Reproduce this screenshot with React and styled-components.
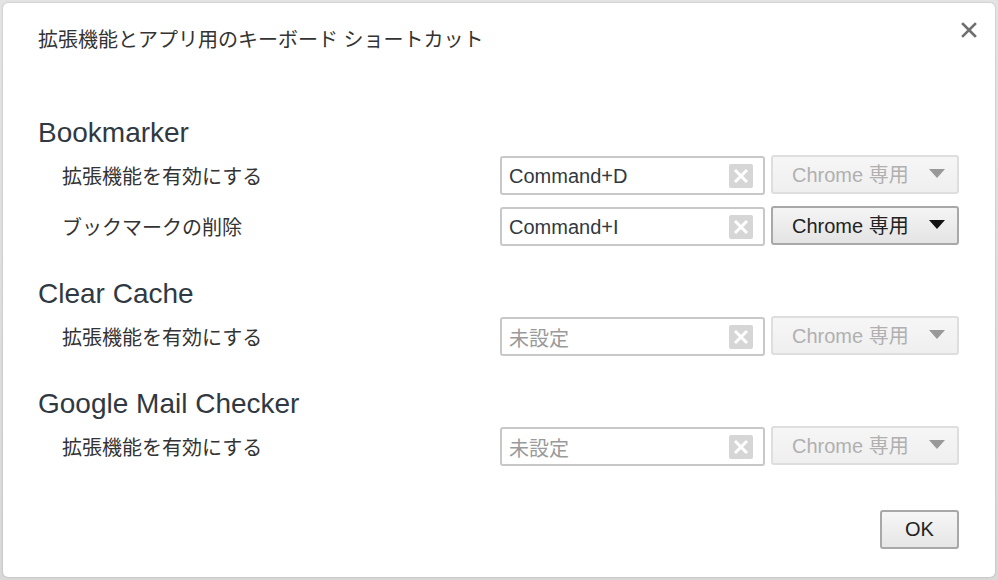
import React from "react";
import styled, { createGlobalStyle } from "styled-components";

const Global = createGlobalStyle`
  html, body { margin: 0; padding: 0; }
  body {
    background: #d6d6d6;
    font-family: "Liberation Sans", "Noto Sans CJK JP", sans-serif;
    width: 998px;
    height: 580px;
    overflow: hidden;
  }
`;

const Backdrop = styled.div`
  width: 998px;
  height: 580px;
  padding: 3px;
  box-sizing: border-box;
  background: linear-gradient(#e4e4e4, #d9d9d9);
`;

const Dialog = styled.div`
  width: 992px;
  height: 574px;
  box-sizing: border-box;
  background: #fff;
  border-radius: 5px;
  box-shadow: 0 0 2px rgba(0, 0, 0, 0.25);
  padding: 25px 36px 28px 35px;
  display: flex;
  flex-direction: column;
`;

const Header = styled.div`
  display: flex;
  justify-content: space-between;
  align-items: flex-start;
`;

const Title = styled.h1`
  margin: 0;
  font-size: 20px;
  line-height: 24px;
  font-weight: normal;
  color: #333;
`;

const Close = styled.button`
  margin: -10px -22px 0 0;
  width: 24px;
  height: 24px;
  padding: 0;
  border: none;
  background: transparent;
  display: flex;
  align-items: center;
  justify-content: center;
`;

const Body = styled.div`
  margin-top: 65px;
  display: flex;
  flex-direction: column;
  gap: 27px;
`;

const Section = styled.section`
  display: flex;
  flex-direction: column;
  gap: 1px;
`;

const Heading = styled.h2`
  margin: 0;
  font-size: 28px;
  line-height: 32px;
  font-weight: normal;
  color: #303942;
`;

const Row = styled.div`
  height: 50px;
  display: flex;
  align-items: center;
`;

const Label = styled.div`
  flex: 1;
  padding-left: 24px;
  font-size: 20px;
  color: #333;
`;

const Input = styled.div`
  width: 265px;
  height: 39px;
  box-sizing: border-box;
  border: 2px solid #c8c8c8;
  border-radius: 3px;
  display: flex;
  align-items: center;
  padding: 2px 10px 0 7px;
  font-size: 20px;
  color: ${(p) => (p.$empty ? "#9a9a9a" : "#303942")};
`;

const InputText = styled.span`
  flex: 1;
`;

const ClearBox = styled.span`
  width: 24px;
  height: 24px;
  border-radius: 2px;
  background: #d6d6d6;
  display: flex;
  align-items: center;
  justify-content: center;
`;

const Select = styled.div`
  margin-left: 6px;
  width: 188px;
  height: 39px;
  box-sizing: border-box;
  border: 2px solid ${(p) => (p.$disabled ? "#dedede" : "#a8a8a8")};
  border-radius: 3px;
  background: ${(p) =>
    p.$disabled
      ? "linear-gradient(#f6f6f6, #efefef)"
      : "linear-gradient(#f4f4f4, #e4e4e4)"};
  display: flex;
  align-items: center;
  padding: 0 12px 2px 19px;
  font-size: 20px;
  color: ${(p) => (p.$disabled ? "#b0b0b0" : "#222")};
  position: relative;
  top: -1px;
`;

const SelectText = styled.span`
  flex: 1;
`;

const Footer = styled.div`
  margin-top: auto;
  display: flex;
  justify-content: flex-end;
`;

const OkButton = styled.button`
  width: 79px;
  height: 39px;
  box-sizing: border-box;
  border: 2px solid #a8a8a8;
  border-radius: 3px;
  background: linear-gradient(#f6f6f6, #e6e6e6);
  font-family: "Liberation Sans", sans-serif;
  font-size: 20px;
  color: #222;
  padding: 0;
`;

const CloseIcon = () => (
  <svg width="16" height="16" viewBox="0 0 16 16">
    <path d="M2 2 L14 14 M14 2 L2 14" stroke="#6f6f6f" strokeWidth="2.6" strokeLinecap="square" />
  </svg>
);

const ClearIcon = () => (
  <svg width="16" height="16" viewBox="0 0 16 16">
    <path d="M2 2 L14 14 M14 2 L2 14" stroke="#fff" strokeWidth="3" strokeLinecap="butt" />
  </svg>
);

const Arrow = ({ color }) => (
  <svg width="16" height="9" viewBox="0 0 16 9">
    <path d="M0 0 H16 L8 9 Z" fill={color} />
  </svg>
);

const data = [
  {
    name: "Bookmarker",
    rows: [
      { label: "拡張機能を有効にする", value: "Command+D", enabled: false },
      { label: "ブックマークの削除", value: "Command+I", enabled: true },
    ],
  },
  {
    name: "Clear Cache",
    rows: [{ label: "拡張機能を有効にする", value: "", enabled: false }],
  },
  {
    name: "Google Mail Checker",
    rows: [{ label: "拡張機能を有効にする", value: "", enabled: false }],
  },
];

export default function App() {
  return (
    <>
      <Global />
      <Backdrop>
        <Dialog>
          <Header>
            <Title>拡張機能とアプリ用のキーボード ショートカット</Title>
            <Close aria-label="閉じる">
              <CloseIcon />
            </Close>
          </Header>
          <Body>
            {data.map((s) => (
              <Section key={s.name}>
                <Heading>{s.name}</Heading>
                {s.rows.map((r, i) => (
                  <Row key={i}>
                    <Label>{r.label}</Label>
                    <Input $empty={!r.value}>
                      <InputText>{r.value || "未設定"}</InputText>
                      <ClearBox>
                        <ClearIcon />
                      </ClearBox>
                    </Input>
                    <Select $disabled={!r.enabled}>
                      <SelectText>Chrome 専用</SelectText>
                      <Arrow color={r.enabled ? "#111" : "#999"} />
                    </Select>
                  </Row>
                ))}
              </Section>
            ))}
          </Body>
          <Footer>
            <OkButton>OK</OkButton>
          </Footer>
        </Dialog>
      </Backdrop>
    </>
  );
}
